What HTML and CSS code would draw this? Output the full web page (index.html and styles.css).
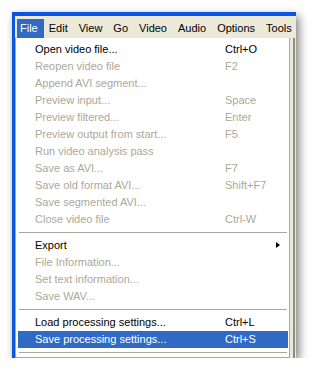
FILE: index.html
```html
<!DOCTYPE html>
<html lang="en">
<head>
<meta charset="UTF-8">
<title>VirtualDub - File menu</title>
<link rel="stylesheet" href="styles.css">
</head>
<body>
<div class="window">
    <div class="client">
        <!-- menu bar -->
        <div class="menubar">
            <span class="bar-item open">File</span>
            <span class="bar-item">Edit</span>
            <span class="bar-item">View</span>
            <span class="bar-item">Go</span>
            <span class="bar-item">Video</span>
            <span class="bar-item">Audio</span>
            <span class="bar-item">Options</span>
            <span class="bar-item">Tools</span>
        </div>
        <div class="below">
            <!-- the open File menu -->
            <div class="menu">
                <div class="item"><span class="label">Open video file...</span><span class="key">Ctrl+O</span></div>
                <div class="item off"><span class="label">Reopen video file</span><span class="key">F2</span></div>
                <div class="item off"><span class="label">Append AVI segment...</span></div>
                <div class="item off"><span class="label">Preview input...</span><span class="key">Space</span></div>
                <div class="item off"><span class="label">Preview filtered...</span><span class="key">Enter</span></div>
                <div class="item off"><span class="label">Preview output from start...</span><span class="key">F5</span></div>
                <div class="item off"><span class="label">Run video analysis pass</span></div>
                <div class="item off"><span class="label">Save as AVI...</span><span class="key">F7</span></div>
                <div class="item off"><span class="label">Save old format AVI...</span><span class="key">Shift+F7</span></div>
                <div class="item off"><span class="label">Save segmented AVI...</span></div>
                <div class="item off"><span class="label">Close video file</span><span class="key">Ctrl-W</span></div>
                <div class="sep"></div>
                <div class="item"><span class="label">Export</span><span class="arrow"></span></div>
                <div class="item off"><span class="label">File Information...</span></div>
                <div class="item off"><span class="label">Set text information...</span></div>
                <div class="item off"><span class="label">Save WAV...</span></div>
                <div class="sep"></div>
                <div class="item"><span class="label">Load processing settings...</span><span class="key">Ctrl+L</span></div>
                <div class="item hot"><span class="label">Save processing settings...</span><span class="key">Ctrl+S</span></div>
                <div class="sep"></div>
            </div>
            <div class="edge"></div>
        </div>
    </div>
</div>
</body>
</html>
```

FILE: styles.css
```css
body{
    margin: 0;
    background: #fff;
    font-family: "Liberation Sans", Arial, sans-serif;
    font-size: 11px;
}
.window{
    width: 284px;
    margin: 12px 0 0 12px;
    padding: 4px 0 0 3px;
    box-sizing: border-box;
    background: #0a56e2;
    box-shadow: 3px 4px 9px rgba(0,0,0,0.5);
}
.client{
    background: #ece9d8;
}
.menubar{
    height: 22px;
    display: flex;
    padding-left: 2px;
}
.bar-item{
    margin-top: 3px;
    height: 19px;
    line-height: 19px;
    padding: 0 6px 0 3px;
    margin-right: 2px;
}
.bar-item.open{
    background: #316ac5;
    color: #fff;
}
.below{
    display: flex;
}
.menu{
    width: 270px;
    background: #fff;
    border: 1px solid #aca899;
    border-top: none;
    padding: 3px 1px 0 2px;
}
.item{
    display: flex;
    height: 17px;
    line-height: 17px;
    padding-left: 17px;
}
.item .label{
    width: 190px;
    white-space: nowrap;
}
.item.off{
    color: #aca899;
}
.item.hot{
    background: #316ac5;
    color: #fff;
}
.arrow{
    margin: 5px 0 0 51px;
    width: 0;
    height: 0;
    border-left: 4px solid #000;
    border-top: 3.5px solid transparent;
    border-bottom: 3.5px solid transparent;
}
.sep{
    height: 9px;
    margin: 0 1px;
    background: linear-gradient(#aca899, #aca899) 0 4px / 100% 1px no-repeat;
}
.edge{
    width: 2px;
    margin-left: 3px;
    background: #8e8c80;
}
```
